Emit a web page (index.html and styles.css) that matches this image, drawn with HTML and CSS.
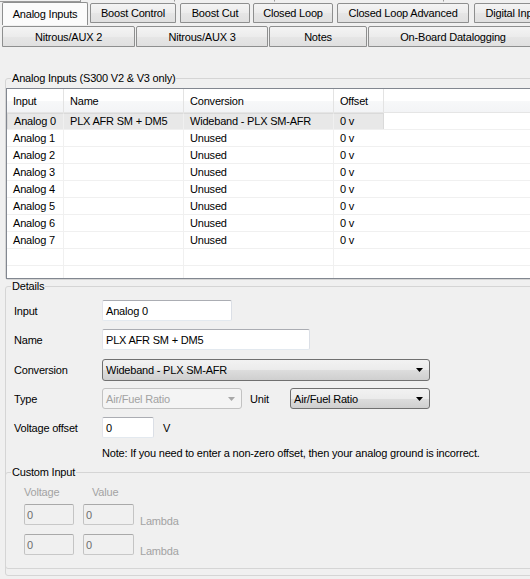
FILE: index.html
```html
<!DOCTYPE html>
<html>
<head>
<meta charset="utf-8">
<title>Analog Inputs</title>
<link rel="stylesheet" href="styles.css">
</head>
<body>
<div class="tabs">
  <div class="tabrow row0">
    <div class="stub s1"></div>
    <div class="stub s2"></div>
    <div class="stub s3"></div>
    <div class="stub s4"></div>
  </div>
  <div class="tabrow row1">
    <div class="tab sel t1">Analog Inputs</div>
    <div class="tab t2">Boost Control</div>
    <div class="tab t3">Boost Cut</div>
    <div class="tab t4">Closed Loop</div>
    <div class="tab t5">Closed Loop Advanced</div>
    <div class="tab t6">Digital Inputs</div>
  </div>
  <div class="tabrow row2">
    <div class="tab u1">Nitrous/AUX 2</div>
    <div class="tab u2">Nitrous/AUX 3</div>
    <div class="tab u3">Notes</div>
    <div class="tab u4">On-Board Datalogging</div>
  </div>
</div>

<fieldset class="group g-analog">
  <legend>Analog Inputs (S300 V2 &amp; V3 only)</legend>
  <div class="listbox">
    <div class="lrow head"><div class="c">Input</div><div class="c">Name</div><div class="c">Conversion</div><div class="c c4">Offset</div><div class="c"></div></div>
    <div class="lrow selrow"><div class="c">Analog 0</div><div class="c">PLX AFR SM + DM5</div><div class="c">Wideband - PLX SM-AFR</div><div class="c c4">0 v</div><div class="c"></div></div>
    <div class="lrow"><div class="c">Analog 1</div><div class="c"></div><div class="c">Unused</div><div class="c c4">0 v</div><div class="c"></div></div>
    <div class="lrow"><div class="c">Analog 2</div><div class="c"></div><div class="c">Unused</div><div class="c c4">0 v</div><div class="c"></div></div>
    <div class="lrow"><div class="c">Analog 3</div><div class="c"></div><div class="c">Unused</div><div class="c c4">0 v</div><div class="c"></div></div>
    <div class="lrow"><div class="c">Analog 4</div><div class="c"></div><div class="c">Unused</div><div class="c c4">0 v</div><div class="c"></div></div>
    <div class="lrow"><div class="c">Analog 5</div><div class="c"></div><div class="c">Unused</div><div class="c c4">0 v</div><div class="c"></div></div>
    <div class="lrow"><div class="c">Analog 6</div><div class="c"></div><div class="c">Unused</div><div class="c c4">0 v</div><div class="c"></div></div>
    <div class="lrow"><div class="c">Analog 7</div><div class="c"></div><div class="c">Unused</div><div class="c c4">0 v</div><div class="c"></div></div>
    <div class="lrow"><div class="c"></div><div class="c"></div><div class="c"></div><div class="c c4"></div><div class="c"></div></div>
    <div class="lrow"><div class="c"></div><div class="c"></div><div class="c"></div><div class="c c4"></div><div class="c"></div></div>
  </div>
</fieldset>

<fieldset class="group g-details">
  <legend>Details</legend>
  <div class="frow r-input">
    <span class="flabel">Input</span>
    <div class="tb w-input">Analog 0</div>
  </div>
  <div class="frow r-name">
    <span class="flabel">Name</span>
    <div class="tb w-name">PLX AFR SM + DM5</div>
  </div>
  <div class="frow r-conv">
    <span class="flabel">Conversion</span>
    <div class="combo w-conv"><span>Wideband - PLX SM-AFR</span><svg class="arrow" width="7" height="4" viewBox="0 0 7 4"><polygon points="0,0 7,0 3.5,4" fill="#000"/></svg></div>
  </div>
  <div class="frow r-type">
    <span class="flabel">Type</span>
    <div class="combo disabled w-type"><span>Air/Fuel Ratio</span><svg class="arrow" width="7" height="4" viewBox="0 0 7 4"><polygon points="0,0 7,0 3.5,4" fill="#a8a8a8"/></svg></div>
    <span class="unit">Unit</span>
    <div class="combo w-unit"><span>Air/Fuel Ratio</span><svg class="arrow" width="7" height="4" viewBox="0 0 7 4"><polygon points="0,0 7,0 3.5,4" fill="#000"/></svg></div>
  </div>
  <div class="frow r-volt">
    <span class="flabel">Voltage offset</span>
    <div class="tb w-volt">0</div>
    <span class="vunit">V</span>
  </div>
  <div class="note">Note: If you need to enter a non-zero offset, then your analog ground is incorrect.</div>

  <fieldset class="group g-custom">
    <legend>Custom Input</legend>
    <div class="ci-head"><span class="ci-volt">Voltage</span><span>Value</span></div>
    <div class="ci-row r1">
      <div class="tb dis w-ci1">0</div>
      <div class="tb dis w-ci2">0</div>
      <span class="lambda">Lambda</span>
    </div>
    <div class="ci-row r2">
      <div class="tb dis w-ci1">0</div>
      <div class="tb dis w-ci2">0</div>
      <span class="lambda">Lambda</span>
    </div>
  </fieldset>
</fieldset>
</body>
</html>
```

FILE: styles.css
```css
* { box-sizing: border-box; }
html, body { margin: 0; padding: 0; overflow: hidden; }
body {
  width: 530px;
  height: 579px;
  background: #f0f0f0;
  font: 11px "Liberation Sans", Arial, sans-serif;
  letter-spacing: -0.2px;
  color: #000;
}

/* ---------- tabs ---------- */
.tabs { display: flex; flex-direction: column; }
.tabrow { display: flex; align-items: flex-end; }
.row0 { height: 2px; }
.stub { height: 2px; border-right: 1px solid #9a9a9a; border-bottom: 1px solid #9a9a9a; flex: none; }
.s1 { width: 81px; }
.s2 { width: 94px; border-bottom-color: transparent; }
.s3 { width: 100px; border-bottom-color: transparent; }
.s4 { width: 169px; border-bottom-color: transparent; }

.row1 { height: 23px; }
.row2 { height: 22px; margin-top: 1px; }
.tab {
  flex: none;
  display: flex;
  align-items: center;
  justify-content: center;
  white-space: nowrap;
  height: 20px;
  margin-bottom: 2px;
  border: 1px solid #8e8f8f;
  border-radius: 2px 2px 0 0;
  background: linear-gradient(#f4f4f4, #ececec 50%, #e6e6e6 51%, #e0e0e0);
}
.tab.sel {
  height: 23px;
  margin-bottom: 0;
  border-bottom: 0;
  background: #fbfbfb;
}
.t1 { margin-left: 2px; width: 86px; }
.t2 { margin-left: 2px; width: 86px; }
.t3 { margin-left: 4px; width: 70px; }
.t4 { margin-left: 3px; width: 80px; }
.t5 { margin-left: 4px; width: 132px; }
.t6 { margin-left: 5px; width: 84px; }

.row2 .tab { height: 21px; margin-bottom: 1px; }
.u1 { margin-left: 2px; width: 133px; }
.u2 { margin-left: 1px; width: 132px; }
.u3 { margin-left: 1px; width: 98px; }
.u4 { margin-left: 1px; width: 170px; }

/* ---------- group boxes ---------- */
.group {
  margin: 0 0 0 5px;
  padding: 0;
  min-width: 0;
  width: 620px;
  border: 1px solid #d5d5d5;
  border-radius: 3px;
}
.group > legend {
  margin-left: 5px;
  padding: 0 1px;
  line-height: 13px;
  height: 13px;
  color: #000;
}
.g-analog { margin-top: 24px; }

/* ---------- list view ---------- */
.listbox {
  margin-top: 3px;
  width: 610px;
  height: 191px;
  border: 1px solid #828790;
  background: #fff;
  overflow: hidden;
}
.lrow {
  display: grid;
  grid-template-columns: 57px 120px 150px 50px 1fr;
  height: 17px;
  border-bottom: 1px solid #f0f0f0;
}
.lrow .c {
  padding-left: 6px;
  line-height: 16px;
  white-space: nowrap;
  overflow: hidden;
  border-right: 1px solid #f0f0f0;
}
.lrow .c:last-child { border-right: 0; }
.lrow .c4 { border-right-color: transparent; }
.lrow.head {
  height: 24px;
  border-bottom: 1px solid #e5e5e5;
  background: linear-gradient(#ffffff, #ffffff 50%, #f7f8f9 51%, #f3f4f6);
}
.lrow.head .c { line-height: 24px; border-right-color: #e3e3e3; }
.lrow.selrow .c:not(:last-child) {
  background: #e8e8e8;
  border-top: 1px solid #dadada;
  line-height: 15px;
}
.lrow.selrow .c:first-child { border-left: 1px solid #dadada; }
.lrow.selrow .c4 { border-right-color: #dadada; }

/* ---------- details ---------- */
.g-details { margin-top: 0; padding-bottom: 6px; }
.frow {
  display: flex;
  align-items: center;
  height: 21px;
  padding-left: 8px;
}
.flabel { width: 88px; flex: none; }
.r-input { margin-top: 7px; }
.r-name { margin-top: 8px; }
.r-conv { margin-top: 9px; height: 22px; }
.r-type { margin-top: 7px; }
.r-volt { margin-top: 8px; }

.tb {
  flex: none;
  height: 21px;
  padding-left: 3px;
  display: flex;
  align-items: center;
  background: #fff;
  border: 1px solid;
  border-color: #abadb3 #dbdfe6 #e3e9ef #e2e3ea;
  border-radius: 2px;
  white-space: nowrap;
}
.w-input { width: 130px; }
.w-name { width: 208px; }
.w-volt { width: 52px; }
.vunit { margin-left: 9px; }

.combo {
  flex: none;
  height: 100%;
  display: flex;
  align-items: center;
  justify-content: space-between;
  padding: 0 6px 0 3px;
  border: 1px solid #707070;
  border-radius: 3px;
  background: linear-gradient(#f2f2f2, #ebebeb 50%, #dddddd 51%, #cfcfcf);
  white-space: nowrap;
}
.combo .arrow { flex: none; }
.combo.disabled {
  border-color: #c2c2c2;
  background: #f4f4f4;
  color: #a2a2a2;
}
.w-conv { width: 328px; }
.w-type { width: 140px; }
.w-unit { width: 140px; }
.unit { width: 40px; margin-left: 8px; flex: none; }

.note {
  margin-top: 8px;
  padding-left: 96px;
  line-height: 14px;
  white-space: nowrap;
}

/* ---------- custom input ---------- */
.g-custom {
  margin: 6px 0 0 -1px;
  padding-bottom: 13px;
  width: 640px;
}
.ci-head {
  display: flex;
  margin-top: 7px;
  padding-left: 18px;
  line-height: 13px;
  color: #a3a3a3;
}
.ci-volt { width: 68px; }
.ci-row {
  display: flex;
  align-items: flex-end;
  height: 21px;
  padding-left: 18px;
}
.ci-row.r1 { margin-top: 5px; }
.ci-row.r2 { margin-top: 9px; }
.tb.dis {
  background: #f0f0f0;
  border-color: #a9a9a9 #c4c4c4 #c8c8c8 #c2c2c2;
  color: #6d6d6d;
  padding-left: 2px;
}
.w-ci1 { width: 50px; }
.w-ci2 { width: 51px; margin-left: 9px; }
.lambda {
  margin-left: 6px;
  margin-bottom: -3px;
  line-height: 13px;
  color: #a3a3a3;
}
```
